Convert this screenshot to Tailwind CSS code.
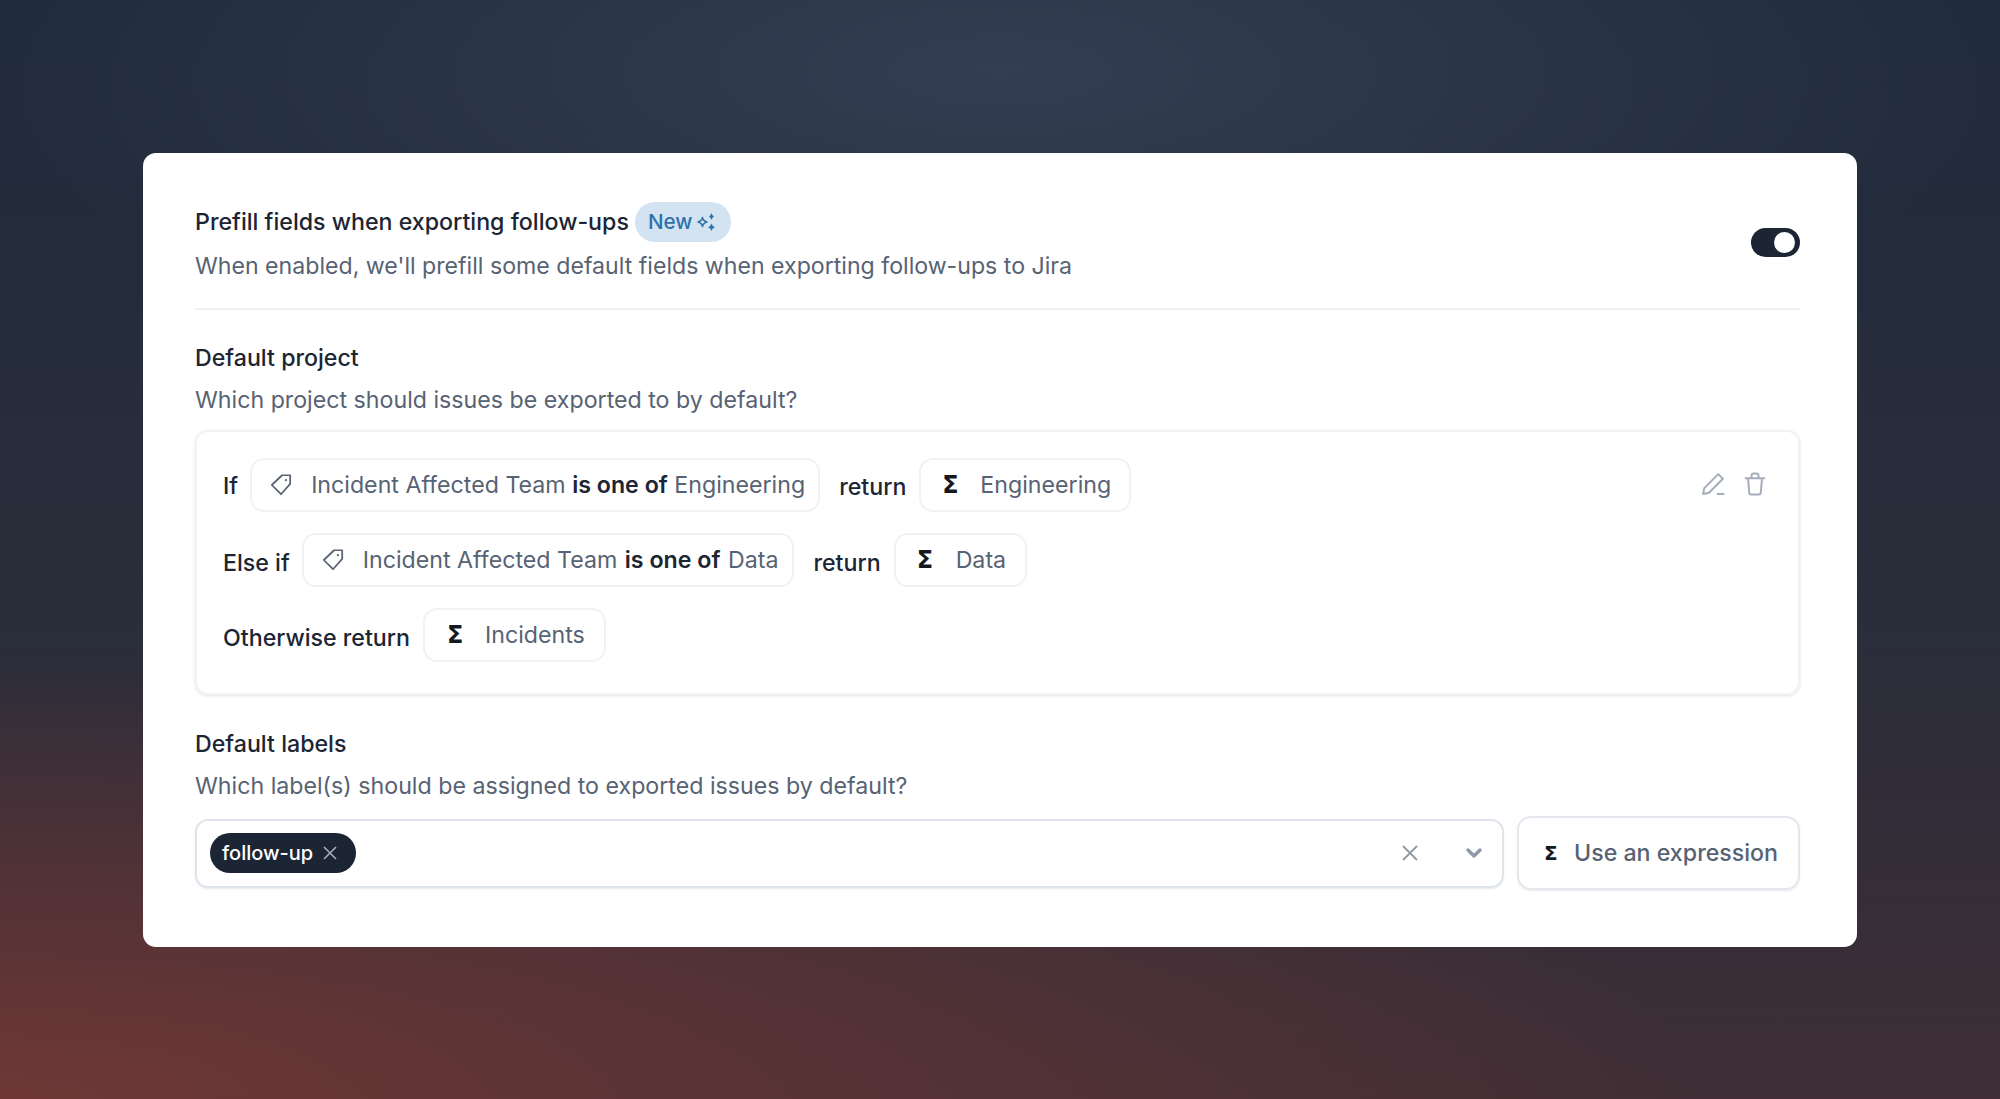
<!DOCTYPE html>
<html><head><meta charset="utf-8"><script src="https://cdn.jsdelivr.net/npm/@tailwindcss/browser@4"></script></head>
<body class="m-0">
<div class="w-[2000px] h-[1099px] overflow-hidden pt-[153px] font-['Inter',sans-serif] bg-[radial-gradient(ellipse_1000px_320px_at_1000px_70px,#333e52_0%,transparent_100%),radial-gradient(ellipse_1700px_440px_at_0px_1099px,#6e3735_0%,transparent_100%),linear-gradient(180deg,#202b3c_0%,#2a2d3a_58%,#3f2e35_100%)]">
<div class="w-[1714px] h-[794px] ml-[143px] bg-white rounded-[13px] pl-[52px] pr-[57px] pt-[49px] text-[23.2px]">
  <div class="flex justify-between border-b-2 border-[#eef0f3] h-[108px]">
    <div>
      <div class="flex items-center h-[40px] gap-[6px]"><span class="font-medium text-[#1c2533]">Prefill fields when exporting follow-ups</span>
        <span class="flex items-center gap-[4px] h-[40px] pl-[13px] pr-[15px] rounded-full bg-[#d3e3f1] text-[#2d71ad] text-[20.7px] font-medium">New
          <svg width="20" height="20" viewBox="0 0 20 20" fill="none"><path d="M6.5 5.5 Q7.2 9 11 10 Q7.2 11 6.5 14.5 Q5.8 11 2 10 Q5.8 9 6.5 5.5Z" stroke="#2d71ad" stroke-width="1.5" stroke-linejoin="round"/><path d="M15.5 1 Q16 3.5 18 4.5 Q16 5.5 15.5 8 Q15 5.5 13 4.5 Q15 3.5 15.5 1Z M15.5 11.5 Q16.2 14.3 19 15.2 Q16.2 16 15.5 19 Q14.8 16 12 15.2 Q14.8 14.3 15.5 11.5Z" fill="#2d71ad"/></svg></span></div>
      <div class="mt-[4px] leading-[40px] text-[23.13px] text-[#576273]">When enabled, we'll prefill some default fields when exporting follow-ups to Jira</div>
    </div>
    <div class="mt-[26px] w-[49px] h-[29px] rounded-full bg-[#1c2533] flex items-center justify-end pr-[5px]"><div class="w-[21px] h-[21px] rounded-full bg-white"></div></div>
  </div>
  <div class="mt-[30px] leading-[36px] font-medium text-[#1c2533]">Default project</div>
  <div class="mt-[6px] leading-[36px] text-[#576273]">Which project should issues be exported to by default?</div>
  <div class="mt-[12px] h-[265px] border-2 border-[#f0f2f6] rounded-[13px] shadow-[0_1px_3px_rgba(30,40,60,0.14)] pl-[26px] pr-[29px] pt-[26px] flex flex-col gap-[21px]">
    <div class="flex items-start h-[54px]">
      <span class="mt-[11px] font-medium text-[#1c2533] mr-[12px]">If</span>
      <div class="h-[54px] border-2 border-[#f0f2f6] rounded-[14px] flex items-center pl-[16px] pr-[13px] text-[#576273]">
        <svg class="mr-[17px]" width="26" height="26" viewBox="0 0 24 24" fill="none" stroke="#576273" stroke-width="1.6" stroke-linejoin="round"><path d="M13 3h7.5v8L12 20.5 3.5 12z"/><circle cx="16.5" cy="7.5" r="1" fill="#576273" stroke="none"/></svg>
        <span>Incident Affected Team <b class="font-semibold text-[#1c2533]">is one of</b> Engineering</span></div>
      <span class="mt-[12px] ml-[19px] font-medium text-[#1c2533] mr-[13px]">return</span>
      <div class="h-[54px] border-2 border-[#f0f2f6] rounded-[14px] flex items-center pl-[21px] pr-[18px] text-[#576273]"><span class="font-bold text-[24px] text-[#14181f] w-[38px] font-['DejaVu_Sans']">Σ</span>Engineering</div>
      <div class="ml-auto mt-[12px] flex gap-[14px]">
        <svg width="28" height="28" viewBox="0 0 24 24" fill="none" stroke="#a4adba" stroke-width="1.7" stroke-linecap="round" stroke-linejoin="round"><path d="M3.5 20.5l1-5L16.5 3.5l4 4L8.5 19.5zM16 20.5h5"/></svg>
        <svg width="28" height="28" viewBox="0 0 24 24" fill="none" stroke="#a4adba" stroke-width="1.7" stroke-linecap="round" stroke-linejoin="round"><path d="M4 7h16M9 7V5a2 2 0 0 1 2-2h2a2 2 0 0 1 2 2v2M6 7l1 12a2 2 0 0 0 2 2h6a2 2 0 0 0 2-2l1-12"/></svg>
      </div>
    </div>
    <div class="flex items-start h-[54px]">
      <span class="mt-[13px] font-medium text-[#1c2533] mr-[12px]">Else if</span>
      <div class="h-[54px] border-2 border-[#f0f2f6] rounded-[14px] flex items-center pl-[16px] pr-[14px] text-[#576273]">
        <svg class="mr-[17px]" width="26" height="26" viewBox="0 0 24 24" fill="none" stroke="#576273" stroke-width="1.6" stroke-linejoin="round"><path d="M13 3h7.5v8L12 20.5 3.5 12z"/><circle cx="16.5" cy="7.5" r="1" fill="#576273" stroke="none"/></svg>
        <span>Incident Affected Team <b class="font-semibold text-[#1c2533] mx-[1px]">is one of</b> Data</span></div>
      <span class="mt-[13px] ml-[19px] font-medium text-[#1c2533] mr-[13px]">return</span>
      <div class="h-[54px] border-2 border-[#f0f2f6] rounded-[14px] flex items-center pl-[21px] pr-[19px] text-[#576273]"><span class="font-bold text-[24px] text-[#14181f] w-[39px] font-['DejaVu_Sans']">Σ</span>Data</div>
    </div>
    <div class="flex items-start h-[54px]">
      <span class="mt-[13px] font-medium text-[#1c2533] mr-[13px]">Otherwise return</span>
      <div class="h-[54px] border-2 border-[#f0f2f6] rounded-[14px] flex items-center pl-[22px] pr-[19px] text-[#576273]"><span class="font-bold text-[24px] text-[#14181f] w-[38px] font-['DejaVu_Sans']">Σ</span>Incidents</div>
    </div>
  </div>
  <div class="mt-[31px] leading-[36px] font-medium text-[#1c2533]">Default labels</div>
  <div class="mt-[6px] leading-[36px] text-[#576273]">Which label(s) should be assigned to exported issues by default?</div>
  <div class="mt-[12px] flex items-center gap-[13px]">
    <div class="flex-1 h-[69px] border-2 border-[#dfe4ec] rounded-[13px] shadow-[0_1px_2px_rgba(30,40,60,0.1)] flex items-center pl-[13px] pr-[19px]">
      <div class="h-[40px] pl-[12px] pr-[18px] rounded-full bg-[#1c2533] flex items-center gap-[9px] text-white text-[20px] font-medium">follow-up
        <svg width="16" height="16" viewBox="0 0 16 16" stroke="#a6adb8" stroke-width="1.6"><path d="M2 2l12 12M14 2L2 14"/></svg></div>
      <svg class="ml-auto mr-[46px]" width="18" height="18" viewBox="0 0 18 18" stroke="#8e98a7" stroke-width="1.8"><path d="M2 2l14 14M16 2L2 16"/></svg>
      <svg width="18" height="12" viewBox="0 0 18 12" fill="none" stroke="#8e98a7" stroke-width="3.4" stroke-linecap="round" stroke-linejoin="round"><path d="M3 3l6 6 6-6"/></svg>
    </div>
    <div class="w-[283px] h-[74px] border-2 border-[#e4e8ee] rounded-[14px] shadow-[0_1px_2px_rgba(30,40,60,0.1)] flex items-center pl-[25px] font-medium text-[#576273]"><span class="font-bold text-[#14181f] text-[20px] w-[30px] font-['DejaVu_Sans']">Σ</span>Use an expression</div>
  </div>
</div>
</div>
</body></html>
